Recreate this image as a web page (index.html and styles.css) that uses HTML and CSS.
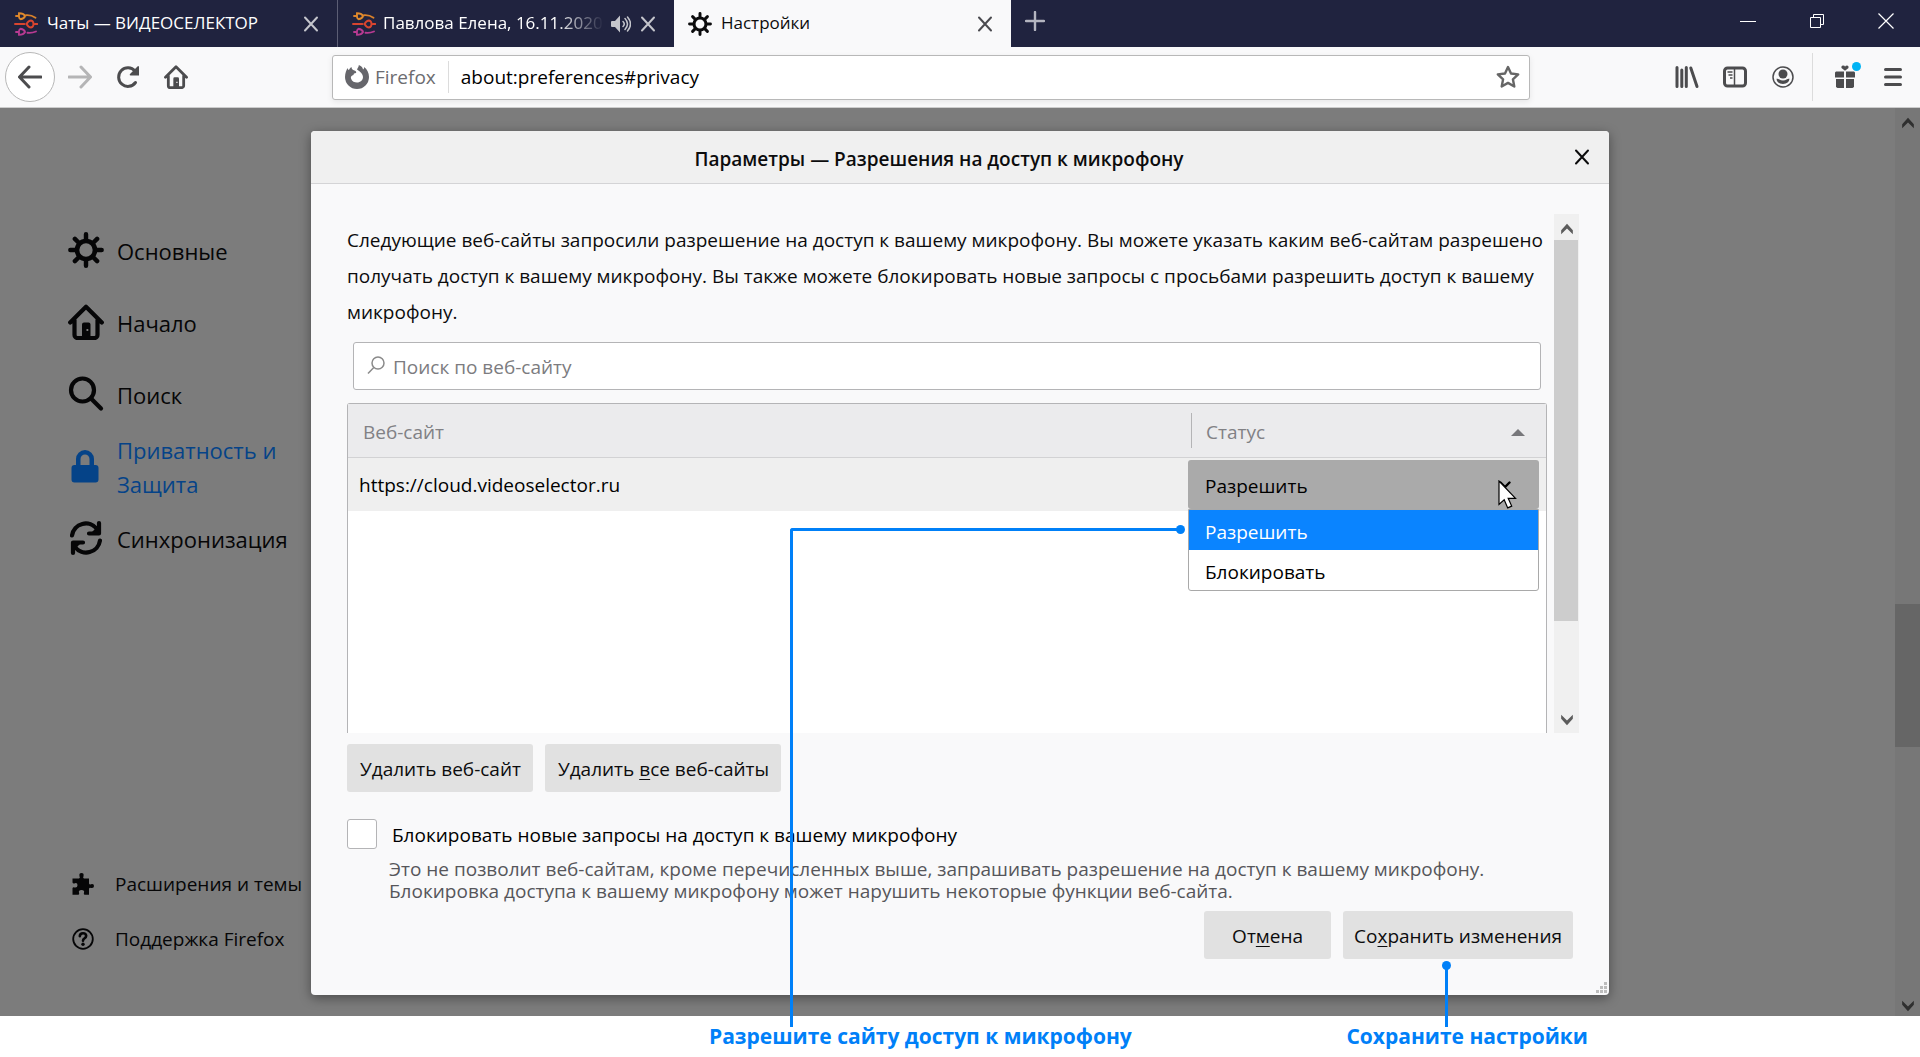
FILE: index.html
```html
<!DOCTYPE html>
<html lang="ru">
<head>
<meta charset="utf-8">
<title>Настройки</title>
<link rel="stylesheet" href="styles.css">
</head>
<body>
<svg class="defs" aria-hidden="true">
  <symbol id="i-gear" viewBox="0 0 34 34">
    <circle cx="17" cy="17" r="8.5" fill="none" stroke="currentColor" stroke-width="4.4"/>
    <g stroke="currentColor" stroke-width="4.2" stroke-linecap="round">
      <path d="M17 2.2V7M17 27v4.800M2.200 17H7M27 17h4.800M6.500 6.500l3.200 3.200M24.300 24.300l3.200 3.200M6.500 27.500l3.200-3.200M24.300 9.700l3.200-3.200"/>
    </g>
  </symbol>
  <symbol id="i-home" viewBox="0 0 36 36">
    <path d="M2.200 18.500L18 2.700l15.800 15.800M6.500 16v15a3 3 0 0 0 3 3h17a3 3 0 0 0 3-3V16" fill="none" stroke="currentColor" stroke-width="4.200" stroke-linecap="round" stroke-linejoin="round"/>
    <path d="M14 33V20.500a2 2 0 0 1 2-2h4.500a2 2 0 0 1 2 2V33zM18.500 25v2h1.800v-2z" fill="currentColor" fill-rule="evenodd"/>
  </symbol>
  <symbol id="i-close" viewBox="0 0 16 16">
    <path d="M2 1.500l12 13M14 1.500l-12 13" fill="none" stroke="currentColor" stroke-width="2" stroke-linecap="round"/>
  </symbol>
  <symbol id="i-logo" viewBox="0 0 24 24">
    <g fill="none" stroke-width="1.900" stroke-linecap="round">
      <path d="M2 4h2.500M12 3.200q5-.5 9.500 2.500" stroke="#d9822b"/>
      <path d="M5 1.200q-.5 5.500 1.500 6 4-.7 4.500-3.200-1.500-2.800-6-2.800z" stroke="#e08a2c"/>
      <path d="M1 12h9.500M21 12h2.500M12.500 12q2-3.500 4.500-3.500 2.500.5 2.500 3.500t-2.500 3.500q-2.500 0-4.500-3.500z" stroke="#d8452f"/>
      <path d="M2 20h2.500M5 22.800q-.5-5.500 1.500-6 4 .7 4.500 3.200-1.500 2.800-6 2.800zM13.500 20.800q4.500.5 8.500-1.300" stroke="#b83a92"/>
    </g>
  </symbol>
  <symbol id="i-up" viewBox="0 0 12 10"><path d="M1 9.500V6L6 .5l5 5.500v3.500L6 4.500z" fill="currentColor"/></symbol>
  <symbol id="i-down" viewBox="0 0 12 10"><path d="M1 .5V4l5 5.500L11 4V.5l-5 5z" fill="currentColor"/></symbol>
</svg>

<header class="tabs">
  <div class="tab">
    <svg class="ic24"><use href="#i-logo"/></svg>
    <span class="tab-title">Чаты — ВИДЕОСЕЛЕКТОР</span>
    <button class="tab-close" aria-label="Закрыть вкладку"><svg class="ic16"><use href="#i-close"/></svg></button>
  </div>
  <div class="tab tab-divided">
    <svg class="ic24"><use href="#i-logo"/></svg>
    <span class="tab-title fading">Павлова Елена, 16.11.2020,</span>
    <button class="tab-sound" aria-label="Отключить звук"><svg class="ic20" viewBox="0 0 20 20"><path d="M1 7h3l5-5.500v17L4 13H1a1 1 0 0 1-1-1V8a1 1 0 0 1 1-1z" fill="currentColor"/><path d="M12 7.500q2.500 2.500 0 5M14 4.500q5 5.500 0 11M16.500 3q6 7 0 14" fill="none" stroke="currentColor" stroke-width="1.500" stroke-linecap="round"/></svg></button>
    <button class="tab-close" aria-label="Закрыть вкладку"><svg class="ic16"><use href="#i-close"/></svg></button>
  </div>
  <div class="tab tab-active">
    <svg class="ic24"><use href="#i-gear"/></svg>
    <span class="tab-title">Настройки</span>
    <button class="tab-close" aria-label="Закрыть вкладку"><svg class="ic16"><use href="#i-close"/></svg></button>
  </div>
  <button class="tab-new" aria-label="Новая вкладка"><svg class="ic20" viewBox="0 0 20 20"><path d="M10 1v18M1 10h18" stroke="currentColor" stroke-width="2.400" stroke-linecap="round"/></svg></button>
  <div class="window-buttons">
    <button aria-label="Свернуть"><svg class="ic16" viewBox="0 0 16 16"><path d="M0 8.500h16" stroke="#fff"/></svg></button>
    <button aria-label="Восстановить"><svg class="ic16" viewBox="0 0 16 16"><path d="M1.500 4.500h10v10h-10zM4.500 4.500v-3h10v10h-3" fill="none" stroke="#fff"/></svg></button>
    <button aria-label="Закрыть"><svg class="ic16" viewBox="0 0 16 16"><path d="M.5.500l15 15M15.500.500l-15 15" stroke="#fff" stroke-width="1.200"/></svg></button>
  </div>
</header>

<nav class="toolbar" aria-label="Панель навигации">
  <button class="back" aria-label="Назад"><svg class="ic24" viewBox="0 0 24 24"><path d="M23 12H2M11 2L1.500 12l9.500 10" class="line"/></svg></button>
  <button class="tool tool-off" aria-label="Вперёд"><svg class="ic24" viewBox="0 0 24 24"><path d="M1 12h21M13 2l9.500 10-9.500 10" class="line"/></svg></button>
  <button class="tool" aria-label="Обновить"><svg class="ic24" viewBox="0 0 24 24"><path d="M19.500 17.500A9.300 9.300 0 1 1 19 6" class="line"/><path d="M22 1q1 0 1 1v8.500h-8.500q-1.500-.2-.5-1.500z" fill="currentColor"/></svg></button>
  <button class="tool" aria-label="Домой"><svg class="ic24"><use href="#i-home"/></svg></button>
  <div class="urlbar">
    <svg class="ic24" viewBox="0 0 24 24"><path d="M12 4.500c1-2 2-3.500 1.800-4.500 3 1 4 3 4.200 4.500 1-.5 1.200-1.500 1-2.500C22 4 24 8 24 12a12 12 0 0 1-24 0C0 8 1.500 5 2.500 3c.3 1.300.8 1.800 1.500 2 .5-1.500 1.500-2.500 2.500-3 0 2 1 3 3 3.500C11 6 11.500 7 11 8c-1.500.2-2.500.6-2.500 2-2 .2-3 2-2.500 3.500 1 3 3.500 4 6 4 3.500 0 6-2.500 6-5.500s-2.500-5-6-7.500z" fill="#66666b"/></svg>
    <span class="url-brand">Firefox</span>
    <input class="url-input" aria-label="Адрес" value="about:preferences#privacy">
    <button class="tool" aria-label="Добавить в закладки"><svg class="ic24" viewBox="0 0 24 24"><path d="M12 2l3 6.500 7.200.9-5.300 4.900 1.400 7.200-6.300-3.600-6.300 3.600 1.400-7.200L1.800 9.400 9 8.500z" class="line medium"/></svg></button>
  </div>
  <button class="tool" aria-label="Библиотека"><svg class="ic24" viewBox="0 0 24 24"><path d="M2 2.500v19M6.800 5v16.500M11.300 2.500v19M15.800 3l6.200 18.500" class="line"/></svg></button>
  <button class="tool" aria-label="Боковая панель"><svg class="ic24" viewBox="0 0 24 24"><rect x="1.500" y="3" width="21" height="18" rx="3" class="line"/><path d="M11.500 3v18" stroke="currentColor" stroke-width="1.500"/><path d="M4.500 7h5M5.500 10h4M7 13h2.500" stroke="currentColor" stroke-width="1.500"/></svg></button>
  <button class="tool" aria-label="Аккаунт"><svg class="ic24" viewBox="0 0 24 24"><circle cx="12" cy="12" r="10" fill="none" stroke="currentColor" stroke-width="1.500"/><circle cx="12" cy="9" r="4.500" fill="currentColor"/><path d="M5.500 13.800q1.500-.5 2.500.5 4 2.500 8 0 1-1 2.500-.5-.5 5-6.500 5.200-6-.2-6.500-5.200z" fill="currentColor"/></svg></button>
  <div class="gift">
    <button class="tool" aria-label="Что нового"><svg class="ic24" viewBox="0 0 24 24"><path d="M3 6.500h8V12.500H2V7.500zM13 6.500h8l1 1V12.500h-9zM3 14H11v9H4.500l-1.500-1zM13 14h8v8l-1.500 1H13zM12 5.800L8.500 3Q8 .500 10 .500t2 1.300Q12.500.500 14.200.500 16 .500 15.500 3z" fill="currentColor"/></svg></button>
    <span class="gift-dot"></span>
  </div>
  <button class="tool" aria-label="Меню"><svg class="ic24" viewBox="0 0 24 24"><path d="M4.500 4.500h15M4.500 12h15M4.500 19.500h15" class="line"/></svg></button>
</nav>

<main class="page">
  <aside class="sidebar">
    <nav class="categories" aria-label="Разделы настроек">
      <a href="#general"><svg><use href="#i-gear"/></svg><span>Основные</span></a>
      <a href="#home"><svg><use href="#i-home"/></svg><span>Начало</span></a>
      <a href="#search"><svg viewBox="0 0 36 36"><circle cx="14.500" cy="14" r="11.500" fill="none" stroke="currentColor" stroke-width="4.200"/><path d="M23 22.500L33 32.500" stroke="currentColor" stroke-width="4.200" stroke-linecap="round"/></svg><span>Поиск</span></a>
      <a href="#privacy" class="selected"><svg viewBox="0 0 36 36"><path d="M8 17V11a9 9 0 0 1 18 0v6h1.500a3 3 0 0 1 3 3v11.500a3 3 0 0 1-3 3h-21a3 3 0 0 1-3-3V20a3 3 0 0 1 3-3zM12.500 17h9V11a4.500 4.500 0 0 0-9 0z" fill="currentColor" fill-rule="evenodd"/></svg><span>Приватность и Защита</span></a>
      <a href="#sync"><svg viewBox="0 0 36 36"><path d="M4 15.500A14 14 0 0 1 29 9M32 20.500A14 14 0 0 1 7 27" fill="none" stroke="currentColor" stroke-width="4.200" stroke-linecap="round"/><path d="M31 3v10.500H21M5 33V22.500h10" fill="none" stroke="currentColor" stroke-width="4.200" stroke-linecap="round" stroke-linejoin="round"/><path d="M31 5v8H23zM5 31v-8h8z" fill="currentColor"/></svg><span>Синхронизация</span></a>
    </nav>
    <nav class="links" aria-label="Дополнительно">
      <a href="#addons"><svg viewBox="0 0 24 24"><path d="M1.500 6.500H8q1.500-.5.500-2.200Q7.800 1 10.500 1t2 3.300q-1 1.700.5 2.200h5v5q.5 1.500 2 .7 3-.8 3 1.800t-3 2q-1.500-.8-2 .7v6h-4.500q-1.200-.5-.5-2 .8-2.700-2.500-2.700t-2.500 2.700q.7 1.500-.5 2h-6v-6.500q.5-1.400 2-.7 3 .5 3-2.200T4 11.200q-2 .8-2.500-.7z" fill="currentColor"/></svg><span>Расширения и темы</span></a>
      <a href="#support"><svg viewBox="0 0 24 24"><circle cx="12" cy="12" r="9.800" fill="none" stroke="currentColor" stroke-width="1.800"/><path d="M8.800 9.200q.2-3 3.200-3t3.200 2.600q0 1.600-1.700 2.500-1.500.8-1.500 2.400" fill="none" stroke="currentColor" stroke-width="2.600" stroke-linecap="round"/><circle cx="12" cy="17.300" r="1.700" fill="currentColor"/></svg><span>Поддержка Firefox</span></a>
    </nav>
  </aside>

  <div class="page-scroll" aria-hidden="true">
    <svg class="arrow"><use href="#i-up"/></svg>
    <div class="page-thumb"></div>
    <svg class="arrow"><use href="#i-down"/></svg>
  </div>

  <section class="dialog" role="dialog" aria-labelledby="dialog-title">
    <header class="dialog-head">
      <h1 id="dialog-title">Параметры — Разрешения на доступ к микрофону</h1>
      <button class="dialog-close" aria-label="Закрыть"><svg class="ic16"><use href="#i-close"/></svg></button>
    </header>
    <div class="dialog-body">
      <div class="scroll-area">
        <div class="scroll-content">
          <p class="intro">Следующие веб-сайты запросили разрешение на доступ к вашему микрофону. Вы можете указать каким веб-сайтам разрешено получать доступ к вашему микрофону. Вы также можете блокировать новые запросы с просьбами разрешить доступ к вашему микрофону.</p>
          <label class="search">
            <svg class="ic20" viewBox="0 0 20 20"><circle cx="12" cy="7" r="6" fill="none" stroke="#8a8a8a" stroke-width="1.500"/><path d="M7.800 11.500L2 17.500" stroke="#8a8a8a" stroke-width="1.500"/></svg>
            <input type="search" placeholder="Поиск по веб-сайту" aria-label="Поиск по веб-сайту">
          </label>
          <div class="sites">
            <table>
              <thead>
                <tr><th scope="col">Веб-сайт</th><th scope="col" class="col-status"><div class="th-status"><span>Статус</span><i class="sort"></i></div></th></tr>
              </thead>
              <tbody>
                <tr>
                  <td>https://cloud.videoselector.ru</td>
                  <td class="col-status">
                    <div class="picker">
                      <select aria-label="Статус сайта"><option>Разрешить</option><option>Блокировать</option></select>
                      <svg class="picker-arrow" viewBox="0 0 12 8"><path d="M1.500 1.500L6 6l4.500-4.500" fill="none" stroke="#000" stroke-width="2.400" stroke-linecap="round"/></svg>
                      <ul class="menu" role="listbox"><li role="option" aria-selected="true">Разрешить</li><li role="option">Блокировать</li></ul>
                      <svg class="cursor" viewBox="0 0 20 30"><path d="M1 1v23.500l5.200-4.800 3.500 8.200 4-1.800-3.500-7.800h7.300z" fill="#fff" stroke="#000" stroke-width="1.200"/></svg>
                    </div>
                  </td>
                </tr>
              </tbody>
            </table>
          </div>
        </div>
        <div class="inner-scroll" aria-hidden="true">
          <svg class="arrow"><use href="#i-up"/></svg>
          <div class="inner-thumb"></div>
          <svg class="arrow"><use href="#i-down"/></svg>
        </div>
      </div>
      <div class="actions">
        <button class="btn">У<u>д</u>алить веб-сайт</button>
        <button class="btn">Удалить <u>в</u>се веб-сайты</button>
      </div>
      <div class="block">
        <input type="checkbox" id="block-new">
        <label for="block-new">Блокировать новые запросы на доступ к вашему микрофону</label>
      </div>
      <p class="hint">Это не позволит веб-сайтам, кроме перечисленных выше, запрашивать разрешение на доступ к вашему микрофону. Блокировка доступа к вашему микрофону может нарушить некоторые функции веб-сайта.</p>
      <div class="dialog-foot">
        <button class="btn btn-cancel">От<u>м</u>ена</button>
        <button class="btn">Со<u>х</u>ранить изменения</button>
      </div>
    </div>
    <svg class="grip" viewBox="0 0 12 12"><path d="M8 0h3v3H8zM4 4h3v3H4zM8 4h3v3H8zM0 8h3v3H0zM4 8h3v3H4zM8 8h3v3H8z" fill="#bdbdbd"/></svg>
    <div class="callout callout-allow"></div>
    <div class="callout callout-save"></div>
  </section>
</main>

<footer class="captions">
  <span>Разрешите сайту доступ к микрофону</span>
  <span>Сохраните настройки</span>
</footer>
</body>
</html>
```
FILE: styles.css
```css
* { box-sizing: border-box; }

body {
  margin: 0;
  min-height: 100vh;
  display: flex;
  flex-direction: column;
  background: #fff;
  color: #0c0c0d;
  font: 19px/24px "Open Sans", "Noto Sans", sans-serif;
}

button, input, select { font: inherit; color: inherit; margin: 0; }
button { border: 0; padding: 0; background: none; display: flex; align-items: center; justify-content: center; }
a { color: inherit; text-decoration: none; }
svg { display: block; flex: none; }
.defs { position: absolute; width: 0; height: 0; }
.ic16 { width: 16px; height: 16px; }
.ic20 { width: 20px; height: 20px; }
.ic24 { width: 24px; height: 24px; }
.line { fill: none; stroke: currentColor; stroke-width: 3; stroke-linecap: round; stroke-linejoin: round; }
.medium { stroke-width: 2.4; }

/* Tab strip */
.tabs { display: flex; height: 47px; background: #20233f; color: #fff; font-size: 17px; }
.tab { flex: 0 1 337px; min-width: 0; display: flex; align-items: center; gap: 9px; padding: 0 16px 0 14px; }
.tab-divided { border-left: 1px solid #5c5e74; gap: 7px; }
.tab-active { background: #f9f9fa; color: #0c0c0d; }
.tab-title { flex: 1; min-width: 0; padding-bottom: 2px; white-space: nowrap; }
.fading { -webkit-mask-image: linear-gradient(to left, transparent 0, #000 48px); mask-image: linear-gradient(to left, transparent 0, #000 48px); }
.tab-close { width: 20px; height: 24px; color: #c4c5cc; }
.tab-active .tab-close { color: #4a4a4f; }
.tab-sound { color: #c4c5cc; }
.tab-new { width: 48px; height: 42px; color: #b4b5c0; }
.window-buttons { display: flex; margin-left: auto; }
.window-buttons button { width: 69px; height: 42px; }

/* Navigation toolbar */
.toolbar { display: flex; align-items: center; height: 61px; padding: 0 4px 0 5px; background: #f9f9fa; border-bottom: 1px solid #ccc; color: #4c4c4e; }
.back { width: 50px; height: 50px; border: 1px solid #b8b8b8; border-radius: 50%; background: #fff; margin-right: 1px; }
.tool { width: 48px; height: 48px; }
.tool-off { color: #b5b5b6; }
.urlbar { flex: 1; display: flex; align-items: center; height: 45px; margin: 0 133px 0 132px; padding-left: 12px; background: #fff; border: 1px solid #b8b8b8; border-radius: 3px; box-shadow: 0 2px 6px rgba(0, 0, 0, .08); }
.url-brand { margin-left: 6px; padding-right: 12px; line-height: 32px; color: #6c6c70; border-right: 1px solid #dcdcdc; }
.url-input { flex: 1; min-width: 0; padding: 0 0 0 12px; border: 0; background: none; color: #000; }
.urlbar .tool { width: 42px; color: #666; }
.gift { position: relative; margin-left: 5px; padding-left: 8px; border-left: 1px solid #dcdcdc; }
.gift-dot { position: absolute; top: 9px; right: 8px; width: 9px; height: 9px; border-radius: 50%; background: #00b3f4; }
.gift + .tool { width: 47px; }

/* Preferences page under the dimmed backdrop */
.page { flex: 1; display: grid; grid-template: 1fr / 1fr; background: #7c7c7c; }
.page > * { grid-area: 1 / 1; }
.sidebar { display: flex; flex-direction: column; justify-content: space-between; width: 310px; padding: 107px 0 50px; color: #060607; }
.categories, .links { display: flex; flex-direction: column; }
.categories a { display: flex; align-items: center; gap: 13px; height: 72px; padding-left: 68px; font-size: 22px; line-height: 34px; }
.categories svg { width: 36px; height: 36px; margin-bottom: 3px; }
.categories span { max-width: 190px; }
.categories .selected { color: #054388; }
.links a { display: flex; align-items: center; gap: 20px; height: 55px; padding-left: 71px; white-space: nowrap; }
.links svg { width: 24px; height: 24px; }

.arrow { width: 14px; height: 12px; }
.page-scroll { justify-self: end; display: flex; flex-direction: column; align-items: center; width: 25px; padding: 9px 0 4px; background: #777; color: #2f2f2f; }
.page-thumb { width: 25px; height: 143px; margin: 475px 0 auto; background: #666; }

/* Permissions dialog */
.dialog { position: relative; margin: 23px 311px 21px; display: flex; flex-direction: column; background: #f9f9fa; border-radius: 4px; box-shadow: 0 3px 12px rgba(0, 0, 0, .4); }
.dialog-head { display: flex; align-items: center; height: 53px; padding: 0 16px 0 0; background: #f0f0f0; border-bottom: 1px solid #d4d4d6; border-radius: 4px 4px 0 0; }
.dialog-head h1 { flex: 1; margin: 3px 0 0; padding-right: 4px; text-align: center; font-size: 19px; font-weight: 600; }
.dialog-close { width: 22px; height: 24px; }
.dialog-body { flex: 1; display: flex; flex-direction: column; padding: 30px 30px 36px 36px; }
.scroll-area { flex: 1; display: flex; justify-content: space-between; }
.scroll-content { flex: 1; display: flex; flex-direction: column; margin-right: 7px; }
.intro { margin: 0; padding: 8px 0 12px; line-height: 36px; }
.search { display: flex; align-items: center; height: 48px; margin: 0 6px 13px; padding: 0 12px; background: #fff; border: 1px solid #b4b4b6; border-radius: 3px; }
.search input { flex: 1; min-width: 0; padding: 1px 0 0 7px; border: 0; background: none; }
.search input::placeholder { color: #7c7c80; opacity: 1; }
.sites { flex: 1; background: #fff; border: 1px solid #b4b4b6; border-bottom: 0; border-radius: 3px 3px 0 0; }

table { width: 100%; border-collapse: separate; border-spacing: 0; }
th { height: 54px; padding: 3px 0 0 15px; text-align: left; font-weight: 400; color: #818185; background: #ebebed; border-bottom: 1px solid #d2d2d4; }
td { height: 53px; padding: 1px 0 0 11px; background: #efefef; color: #000; }
.col-status { width: 358px; }
th.col-status { padding: 0 0 0 3px; }
td.col-status { padding: 0 7px 0 0; }
.th-status { display: flex; align-items: center; justify-content: space-between; height: 35px; padding: 3px 21px 0 14px; border-left: 1px solid #b4b4b6; }
.sort { border: 7px solid transparent; border-top: 0; border-bottom-color: #77777b; }

.picker { position: relative; color: #000; }
.picker select { display: block; width: 100%; height: 49px; padding: 2px 17px 0; border: 0; border-radius: 3px; background: #aaa; appearance: none; }
.picker-arrow { position: absolute; top: 21px; right: 28px; width: 12px; height: 8px; }
.menu { position: absolute; z-index: 1; top: 49px; left: 0; right: 0; margin: 0; padding: 0; list-style: none; background: #fff; border: 1px solid #a9a9a9; border-radius: 0 0 3px 3px; }
.menu li { height: 40px; padding: 4px 16px 0; line-height: 36px; }
.menu li[aria-selected] { background: #0a84ff; color: #fff; }
.cursor { position: absolute; z-index: 2; top: 20px; right: 21px; width: 20px; height: 30px; }

.inner-scroll { width: 25px; display: flex; flex-direction: column; align-items: center; padding: 9px 0 7px; background: #f0f0f0; color: #5c5c5c; }
.inner-thumb { width: 24px; height: 381px; margin: 5px 1px auto 0; background: #cdcdcd; }

.actions, .dialog-foot { display: flex; gap: 12px; }
.actions { margin-top: 11px; }
.dialog-foot { justify-content: flex-end; margin-top: 9px; padding-right: 6px; }
.btn { display: block; height: 48px; padding: 1px 12px 0 13px; background: #e1e1e1; border-radius: 3px; white-space: nowrap; }
.dialog-foot .btn { padding: 2px 11px 0; }
.btn-cancel { min-width: 127px; }
u { text-underline-offset: 3px; }
.block { display: flex; align-items: center; gap: 15px; margin-top: 27px; }
.block input { appearance: none; width: 30px; height: 30px; background: #fff; border: 1px solid #b4b4b6; border-radius: 3px; }
.block label { padding-top: 1px; color: #000; }
.hint { margin: 9px 0 0 42px; max-width: 1150px; line-height: 22px; color: #56565a; }
.grip { position: absolute; right: 1px; bottom: 1px; width: 12px; height: 12px; }

/* Annotation leaders; each ends in a dot beside the control it points at */
.callout { position: absolute; z-index: 3; bottom: -32px; border: 0 solid #0080f8; }
.callout::after { content: ""; position: absolute; width: 9px; height: 9px; border-radius: 50%; background: #0080f8; }
.callout-allow { top: 397px; left: 479px; right: 428px; border-width: 3px 0 0 3px; border-top-left-radius: 3px; pointer-events: none; }
.callout-allow::after { top: -6px; right: -4px; }
.callout-save { right: 161px; height: 62px; border-left-width: 3px; }
.callout-save::after { top: -4px; left: -6px; }

.captions { display: flex; justify-content: space-between; align-items: center; height: 41px; padding: 0 332px 2px 709px; color: #0080f8; font-size: 21px; font-weight: 700; white-space: nowrap; }
```
